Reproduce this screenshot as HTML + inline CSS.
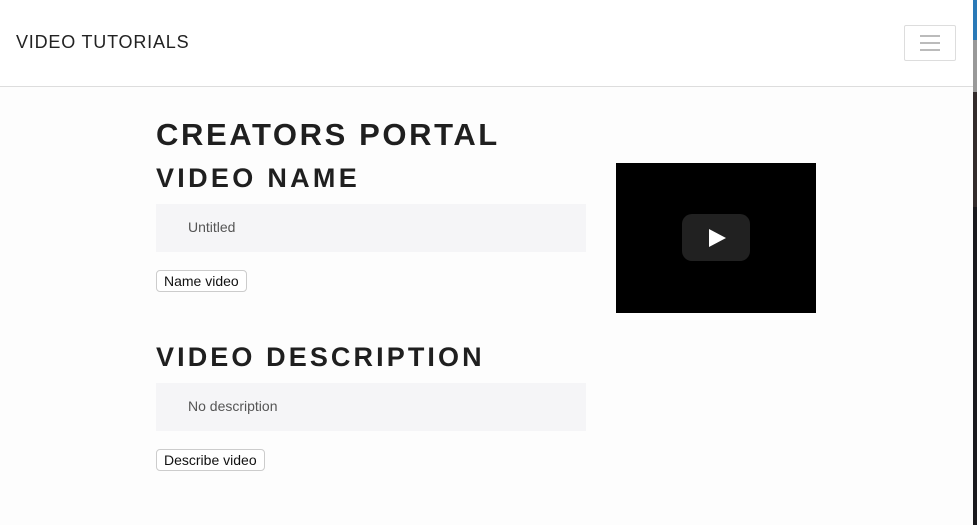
<!DOCTYPE html>
<html><head><style>
*{margin:0;padding:0;box-sizing:border-box}
body{width:977px;height:525px;overflow:hidden;background:#fdfdfd;font-family:"Liberation Sans",sans-serif;color:#222;position:relative}
.hdr{position:absolute;left:0;top:0;width:973px;height:87px;background:#fff;border-bottom:1px solid #ddd}
.brand{position:absolute;left:16px;top:32px;font-size:18px;letter-spacing:0.8px;color:#222}
.tog{position:absolute;left:904px;top:25px;width:52px;height:36px;border:1px solid #ddd;border-radius:2px}
.tog i{position:absolute;left:15px;width:20px;height:2px;background:#bbb}
.strip{position:absolute;left:973px;top:0;width:4px;height:525px;background:#1a1a1e}
h1{position:absolute;left:156px;font-weight:bold;color:#1f1f1f;white-space:nowrap}
.box{position:absolute;left:156px;width:430px;height:48px;background:#f5f5f7;font-size:14px;color:#555;padding:15px 0 0 32px}
.btn{position:absolute;left:156px;height:22px;border:1px solid #ccc;border-radius:4px;background:#fff;font-size:14px;padding:2px 7px;color:#111}
.vid{position:absolute;left:616px;top:163px;width:200px;height:150px;background:#000}
.pl{position:absolute;left:66px;top:51px;width:68px;height:47px;background:#212121;border-radius:10px}
.tri{position:absolute;left:27px;top:15px;width:0;height:0;border-left:17px solid #fff;border-top:9px solid transparent;border-bottom:9px solid transparent}
</style></head><body>
<div class="hdr"><div class="brand">VIDEO TUTORIALS</div>
<div class="tog"><i style="top:9px"></i><i style="top:16px"></i><i style="top:23px"></i></div></div>
<div class="strip"><div style="height:40px;background:#2a7ab8"></div><div style="height:52px;background:#999"></div><div style="height:115px;background:#332c2c"></div></div>
<h1 style="top:117px;font-size:31px;letter-spacing:2.6px">CREATORS PORTAL</h1>
<h1 style="top:163px;font-size:27px;letter-spacing:3.3px">VIDEO NAME</h1>
<div class="box" style="top:204px">Untitled</div>
<div class="btn" style="top:270px">Name video</div>
<h1 style="top:342px;font-size:27px;letter-spacing:3.1px">VIDEO DESCRIPTION</h1>
<div class="box" style="top:383px">No description</div>
<div class="btn" style="top:449px">Describe video</div>
<div class="vid"><div class="pl"><div class="tri"></div></div></div>
</body></html>
